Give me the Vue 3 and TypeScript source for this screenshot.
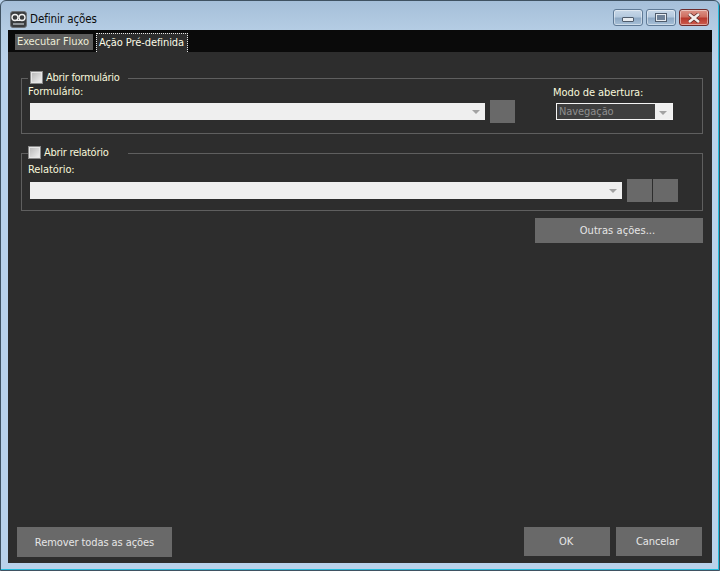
<script setup lang="ts">
const ACTIVE_TAB = 'Ação Pré-definida';
const tabs = ['Executar Fluxo', ACTIVE_TAB];
</script>

<template>
  <div class="window">
    <header class="titlebar">
      <svg class="app-icon" width="17" height="17" viewBox="0 0 17 17">
        <rect x="0.5" y="0.5" width="16" height="16" rx="2.5" fill="#3a3d3f" stroke="#6d7278" />
        <circle cx="5" cy="6.5" r="3" fill="none" stroke="#f2f2f2" stroke-width="1.4" />
        <circle cx="12" cy="6.5" r="3" fill="none" stroke="#f2f2f2" stroke-width="1.4" />
        <path d="M5 9.5h7" stroke="#f2f2f2" />
        <path d="M3 13h11" stroke="#8f9498" stroke-width="2" />
      </svg>
      <span class="title">Definir ações</span>
      <div class="controls">
        <button class="ctl">
          <span class="min-glyph"></span>
        </button>
        <button class="ctl">
          <span class="max-glyph"></span>
        </button>
        <button class="ctl close">
          <svg width="16" height="10" viewBox="0 0 16 10">
            <path d="M3 1l10 8M13 1L3 9" stroke="#5c2a26" stroke-width="4" />
            <path d="M3 1l10 8M13 1L3 9" stroke="#f4eeec" stroke-width="2.6" />
          </svg>
        </button>
      </div>
    </header>

    <div class="client">
      <nav class="tabs">
        <span
          v-for="tab in tabs"
          :key="tab"
          class="tab"
          :class="{ active: tab === ACTIVE_TAB }"
        >{{ tab }}</span>
      </nav>

      <main class="panel">
        <fieldset class="group first">
          <legend>
            <span class="check"></span>
            <span class="legend-text">Abrir formulário</span>
          </legend>
          <div class="row">
            <div class="field grow">
              <label>Formulário:</label>
              <div class="combo-line">
                <div class="combo"><i class="arrow"></i></div>
                <button class="square"></button>
              </div>
            </div>
            <div class="field mode">
              <label>Modo de abertura:</label>
              <div class="combo-line">
                <div class="combo disabled">
                  <span class="value">Navegação</span>
                  <span class="drop"><i class="arrow"></i></span>
                </div>
              </div>
            </div>
          </div>
        </fieldset>

        <fieldset class="group second">
          <legend>
            <span class="check"></span>
            <span class="legend-text">Abrir relatório</span>
          </legend>
          <div class="field">
            <label>Relatório:</label>
            <div class="combo-line">
              <div class="combo"><i class="arrow"></i></div>
              <div class="pair">
                <button class="square"></button>
                <button class="square"></button>
              </div>
            </div>
          </div>
        </fieldset>

        <div class="more">
          <button class="btn other">Outras ações...</button>
        </div>

        <footer class="footer">
          <button class="btn remove">Remover todas as ações</button>
          <div class="confirm">
            <button class="btn action ok">OK</button>
            <button class="btn action cancel">Cancelar</button>
          </div>
        </footer>
      </main>
    </div>
  </div>
</template>

<style>
html,
body {
  margin: 0;
  background: #b9d2eb;
}
</style>

<style scoped>
.window {
  box-sizing: border-box;
  width: 720px;
  height: 571px;
  display: flex;
  flex-direction: column;
  padding: 0 7px 7px 7px;
  background: linear-gradient(180deg, #a5bfd9 0, #b5cde4 30px, #b9d2eb 60px);
  border: 1px solid #3f5262;
  border-radius: 6px 6px 0 0;
  box-shadow: inset -1px -1px 0 #22bcdc;
  font-family: "DejaVu Sans", "Noto Sans", sans-serif;
  font-stretch: condensed;
  font-size: 11px;
  letter-spacing: -0.08px;
}

.titlebar {
  height: 29px;
  flex: none;
  display: flex;
  align-items: center;
  padding-top: 7px;
  box-sizing: border-box;
}

.app-icon {
  margin-left: 2px;
  flex: none;
}

.title {
  margin-left: 3px;
  font-size: 11.5px;
  color: #0c0c0c;
}

.controls {
  margin-left: auto;
  margin-right: 3px;
  margin-top: -3px;
  display: flex;
  gap: 3px;
}

.ctl {
  width: 30px;
  height: 17px;
  padding: 0;
  display: flex;
  align-items: center;
  justify-content: center;
  border: 1px solid #5f7a96;
  border-radius: 3px;
  background: linear-gradient(180deg, #c8d8e8 0, #b4c9de 45%, #8ea9c4 55%, #a7c0d8 100%);
  box-shadow: inset 0 0 0 1px rgba(255, 255, 255, 0.45);
}

.ctl.close {
  border-color: #6e2c2c;
  background: linear-gradient(180deg, #dc9488 0, #cf6e60 45%, #b8382c 55%, #cc5c4e 100%);
}

.min-glyph {
  width: 10px;
  height: 3px;
  margin-top: 4px;
  background: #e6ebf0;
  border: 1px solid #4f5c6c;
  border-radius: 1px;
}

.max-glyph {
  box-sizing: border-box;
  width: 12px;
  height: 9px;
  border: 2px solid #e6ebf0;
  outline: 1px solid #4f5c6c;
  outline-offset: -1px;
  background: #6f8298;
}

.client {
  flex: 1;
  display: flex;
  flex-direction: column;
  min-height: 0;
  background: #2d2d2d;
}

.tabs {
  height: 22px;
  flex: none;
  display: flex;
  align-items: flex-end;
  background: #0a0a0a;
  padding: 0 0 0 7px;
  gap: 3px;
  color: #f0f0f0;
}

.tab {
  box-sizing: border-box;
  height: 16px;
  margin-bottom: 2px;
  padding: 0 4px 0 2px;
  line-height: 15px;
  white-space: nowrap;
  background: #5c5c5c;
  color: #ececd8;
}

.tab.active {
  height: 19px;
  margin-bottom: 0;
  padding: 0 3px 0 2px;
  line-height: 18px;
  background: #2d2d2d;
  color: #fbfbe6;
  border: 1px dotted #e6e6e6;
  border-bottom: none;
}

.panel {
  flex: 1;
  display: flex;
  flex-direction: column;
  min-height: 0;
  padding: 0 9px 6px 13px;
}

.group {
  margin: 0;
  padding: 0 0 0 6px;
  min-width: 0;
  border: 1px solid #5f5f5f;
  color: #f8f8dc;
  box-sizing: border-box;
}

.group.first {
  margin-top: 19px;
  height: 63px;
}

.group.second {
  margin-top: 12px;
  height: 65px;
}

legend {
  display: flex;
  align-items: center;
  gap: 3px;
  height: 14px;
  line-height: 14px;
}

.legend-text {
  letter-spacing: -0.28px;
}

.first legend {
  padding: 0 8px 0 2px;
}

.first .check {
  margin-top: -2px;
}

.second legend {
  padding: 0 20px 0 0;
}

.second .legend-text {
  margin-top: -1px;
}

.check {
  box-sizing: border-box;
  width: 13px;
  height: 13px;
  border: 1px solid #8a8a8a;
  background: linear-gradient(135deg, #b4b4b4, #f4f4f4);
  box-shadow: inset 0 0 0 1px #e6e6e6;
}

.second .check {
  margin-top: -2px;
}

.row {
  display: flex;
}

.field {
  display: flex;
  flex-direction: column;
}

.second .field {
  padding-top: 3px;
}

.grow {
  flex: 1;
}

.mode {
  width: 149px;
  flex: none;
}

.mode label {
  margin-top: 1px;
  margin-bottom: -1px;
}

.field label {
  height: 14px;
  line-height: 14px;
}

.combo-line {
  display: flex;
  align-items: center;
  gap: 5px;
  height: 23px;
  margin-left: 2px;
  margin-top: 1px;
}

.second .combo-line {
  margin-top: 2px;
}

.combo {
  position: relative;
  box-sizing: border-box;
  height: 17px;
  background: #efefef;
}

.first .combo {
  width: 455px;
}

.second .combo {
  width: 592px;
}

.mode .combo-line {
  margin-left: 3px;
}

.first .combo.disabled {
  display: flex;
  width: 117px;
  border: 1px solid #f4f4f4;
  background: #3e3e3e;
  color: #8f8f8f;
}

.value {
  flex: 1;
  padding-left: 2px;
  line-height: 16px;
}

.drop {
  position: relative;
  width: 17px;
  background: #efefef;
}

.arrow {
  position: absolute;
  right: 5px;
  top: 7px;
  width: 0;
  height: 0;
  border-left: 4px solid transparent;
  border-right: 4px solid transparent;
  border-top: 4px solid #a2a2a2;
}

.pair {
  display: flex;
  gap: 1px;
}

.square {
  width: 25px;
  height: 23px;
  padding: 0;
  border: none;
  background: #696969;
}

.more {
  display: flex;
  justify-content: flex-end;
  margin-top: 7px;
}

.btn {
  padding: 0;
  border: none;
  background: #696969;
  color: #e6e6e6;
  font: inherit;
  letter-spacing: inherit;
  height: 25px;
}

.other {
  width: 168px;
  padding-right: 3px;
  letter-spacing: 0.06px;
}

.footer {
  margin-top: auto;
  display: flex;
  justify-content: space-between;
  align-items: flex-start;
  margin-left: -4px;
}

.remove {
  width: 155px;
  height: 30px;
}

.confirm {
  display: flex;
  gap: 6px;
  margin-right: 1px;
}

.action {
  width: 86px;
  height: 29px;
  padding-bottom: 1px;
}

.ok {
  padding-right: 2px;
}

.cancel {
  padding-right: 3px;
}
</style>
